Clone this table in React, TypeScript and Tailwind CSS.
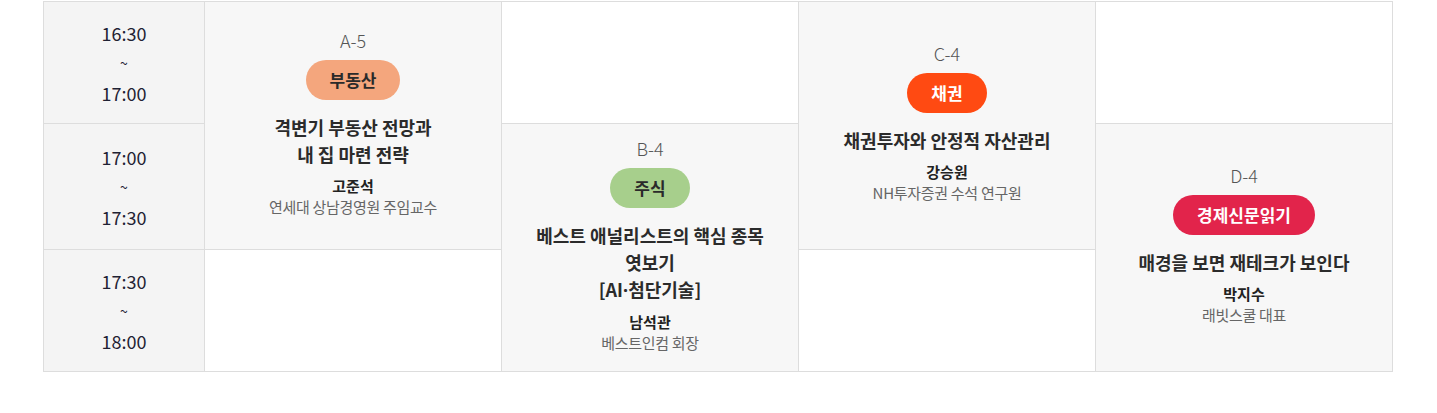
import React from 'react';

type Session = {
  code: string;
  tag: string;
  tagClass: string;
  title: React.ReactNode[];
  speaker: string;
  role: string;
  area: string;
};

const times = [
  { start: '16:30', end: '17:00', area: 'col-start-1 row-start-1' },
  { start: '17:00', end: '17:30', area: 'col-start-1 row-start-2' },
  { start: '17:30', end: '18:00', area: 'col-start-1 row-start-3' },
];

const sessions: Session[] = [
  {
    code: 'A-5',
    tag: '부동산',
    tagClass: 'bg-[#f4a67d] text-[#2a2a2a]',
    title: ['격변기 부동산 전망과', '내 집 마련 전략'],
    speaker: '고준석',
    role: '연세대 상남경영원 주임교수',
    area: 'col-start-2 row-start-1 row-span-2',
  },
  {
    code: 'B-4',
    tag: '주식',
    tagClass: 'bg-[#a7cf8c] text-[#2a2a2a]',
    title: [
      '베스트 애널리스트의 핵심 종목',
      '엿보기',
      <>
        [AI<span className="font-['Noto_Sans',sans-serif]">·</span>첨단기술]
      </>,
    ],
    speaker: '남석관',
    role: '베스트인컴 회장',
    area: 'col-start-3 row-start-2 row-span-2',
  },
  {
    code: 'C-4',
    tag: '채권',
    tagClass: 'bg-[#ff4a12] text-white',
    title: ['채권투자와 안정적 자산관리'],
    speaker: '강승원',
    role: 'NH투자증권 수석 연구원',
    area: 'col-start-4 row-start-1 row-span-2',
  },
  {
    code: 'D-4',
    tag: '경제신문읽기',
    tagClass: 'bg-[#e2244b] text-white',
    title: ['매경을 보면 재테크가 보인다'],
    speaker: '박지수',
    role: '래빗스쿨 대표',
    area: 'col-start-5 row-start-2 row-span-2',
  },
];

const empties = [
  'col-start-2 row-start-3',
  'col-start-3 row-start-1',
  'col-start-4 row-start-3',
  'col-start-5 row-start-1',
];

const App: React.FC = () => {
  return (
    <div className="min-h-[413px] bg-white pt-px font-['Noto_Sans_CJK_KR','Noto_Sans',sans-serif]">
      <div className="ml-[43px] grid w-[1350px] grid-cols-[160px_repeat(4,296px)] grid-rows-[121px_125px_121px] gap-px border border-[#dddddd] bg-[#dddddd]">
        {/* Time column */}
        {times.map((t) => (
          <div
            key={t.start}
            className={`${t.area} flex flex-col items-center justify-center bg-[#f4f4f4] text-[18px] leading-[30px] text-[#1f2233]`}
          >
            <span>{t.start}</span>
            <span className="text-[14px]">~</span>
            <span>{t.end}</span>
          </div>
        ))}

        {/* Sessions */}
        {sessions.map((s) => (
          <div
            key={s.code}
            className={`${s.area} flex flex-col items-center justify-center bg-[#f7f7f7] pb-[7px] text-center`}
          >
            <p className="text-[18px] font-light leading-[24px] text-[#555555]">{s.code}</p>
            <span
              className={`mt-2 inline-flex h-[40px] items-center rounded-full px-6 text-[17px] font-bold ${s.tagClass}`}
            >
              {s.tag}
            </span>
            <h3 className="mt-[14px] text-[18px] font-bold leading-[27px] text-[#2b2b2b]">
              {s.title.map((line, i) => (
                <span key={i} className="block">
                  {line}
                </span>
              ))}
            </h3>
            <p className="mt-[7px] text-[15px] font-bold leading-[21px] text-[#222222]">{s.speaker}</p>
            <p className="text-[15px] leading-[21px] tracking-[-0.02em] text-[#666666]">{s.role}</p>
          </div>
        ))}

        {/* Empty slots */}
        {empties.map((area) => (
          <div key={area} className={`${area} bg-white`} />
        ))}
      </div>
    </div>
  );
};

export default App;
